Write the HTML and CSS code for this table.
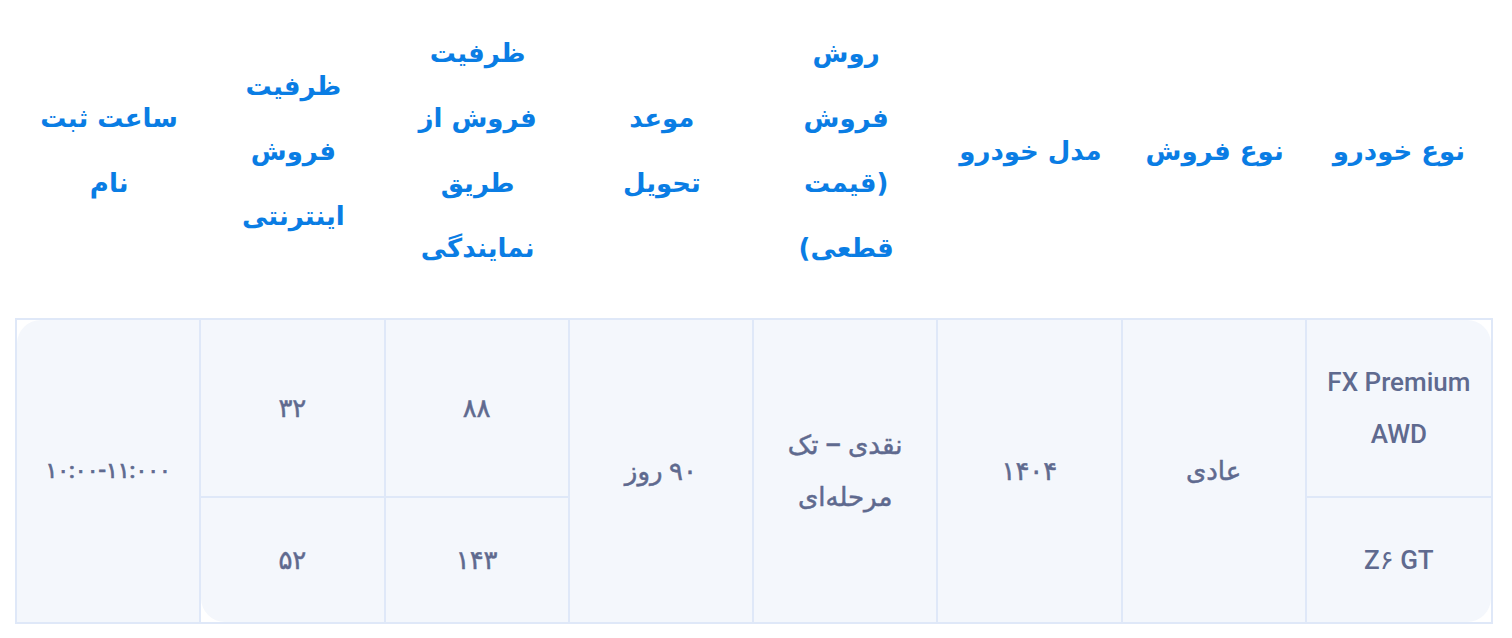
FILE: index.html
```html
<!DOCTYPE html>
<html lang="fa" dir="rtl">
<head>
<meta charset="utf-8">
<title>جدول فروش خودرو</title>
<link rel="stylesheet" href="styles.css">
</head>
<body>
<div class="sheet">
  <div class="head">
    <div class="th">نوع خودرو</div>
    <div class="th">نوع فروش</div>
    <div class="th">مدل خودرو</div>
    <div class="th">روش<br>فروش<br>(قیمت<br>قطعی)</div>
    <div class="th">موعد<br>تحویل</div>
    <div class="th">ظرفیت<br>فروش از<br>طریق<br>نمایندگی</div>
    <div class="th">ظرفیت<br>فروش<br>اینترنتی</div>
    <div class="th">ساعت ثبت<br>نام</div>
  </div>
  <div class="frame">
    <table class="data">
      <tbody>
        <tr>
          <td class="first tr-round">FX Premium AWD</td>
          <td rowspan="2" class="fa">عادی</td>
          <td rowspan="2" class="fa">۱۴۰۴</td>
          <td rowspan="2" class="fa">نقدی – تک مرحله‌ای</td>
          <td rowspan="2" class="fa">۹۰ روز</td>
          <td class="fa">۸۸</td>
          <td class="fa">۳۲</td>
          <td rowspan="2" class="fa time tl-round">۱۰:۰۰-۱۱:۰۰۰</td>
        </tr>
        <tr>
          <td class="first br-round lower">Z۶ GT</td>
          <td class="fa lower">۱۴۳</td>
          <td class="fa lower bl-round">۵۲</td>
        </tr>
      </tbody>
    </table>
  </div>
</div>
</body>
</html>
```

FILE: styles.css
```css
html, body {
  margin: 0;
  padding: 0;
  background: #ffffff;
}

.sheet {
  width: 1478px;
  margin-left: 15px;
  margin-right: 19px;
  font-family: Roboto, "DejaVu Sans", sans-serif;
}

.head {
  display: grid;
  grid-template-columns: repeat(8, 1fr);
  height: 318px;
  box-sizing: border-box;
  padding: 0 2px 16px;
  align-items: center;
}

.th {
  text-align: center;
  font-family: "DejaVu Sans", sans-serif;
  font-weight: 700;
  font-size: 26px;
  line-height: 65px;
  color: #0a7de4;
}

.frame {
  border: 2px solid #dfe8f8;
}

.data {
  width: 100%;
  table-layout: fixed;
  border-collapse: separate;
  border-spacing: 0;
}

.data td {
  background: #f4f7fc;
  text-align: center;
  vertical-align: middle;
  padding: 36px 14px;
  font-size: 26px;
  font-weight: 500;
  line-height: 52px;
  color: #5f6a8f;
  border-right: 2px solid #dfe8f8;
}

.data td.fa {
  -webkit-text-stroke: 0.5px #5f6a8f;
}

.data td.time {
  font-size: 22px;
  -webkit-text-stroke: 0.7px #5f6a8f;
}

.data td.first {
  border-right: none;
}

.data td.lower {
  border-top: 2px solid #dfe8f8;
}

.data td.bl-round {
  border-bottom-left-radius: 24px;
}

.data td.tr-round {
  border-top-right-radius: 24px;
}

.data td.br-round {
  border-bottom-right-radius: 24px;
}

.data td.tl-round {
  border-top-left-radius: 24px;
}
```
